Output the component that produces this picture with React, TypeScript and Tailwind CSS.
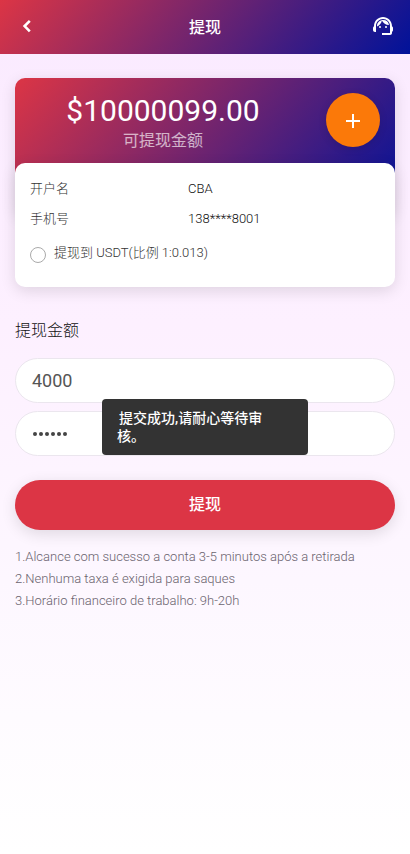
import { MdSupportAgent } from "react-icons/md";

function Header() {
  return (
    <header className="flex h-[54px] items-center justify-between bg-[linear-gradient(130deg,#dc3545,#00129a)] px-[15px] text-white">
      <button className="flex size-6 items-center justify-center" aria-label="返回">
        <svg width="24" height="24" viewBox="0 0 24 24" fill="none" stroke="currentColor" strokeWidth="2.6">
          <path d="M14.8 5.9 9.6 11.1l5.2 5.2" />
        </svg>
      </button>
      <h1 className="pt-px text-base leading-6 font-medium">提现</h1>
      <button className="flex size-6 items-center justify-center" aria-label="客服">
        <MdSupportAgent size={24} className="-mt-0.5" />
      </button>
    </header>
  );
}

function Row({ label, value }: { label: string; value: string }) {
  return (
    <div className="flex h-[30px] items-center text-[13px]">
      <span className="w-[158px] font-light text-[#333]">{label}</span>
      <span className="font-light text-[#111]">{value}</span>
    </div>
  );
}

function BalanceCard() {
  return (
    <section>
      <div className="flex h-[138px] items-start rounded-[10px] bg-[linear-gradient(130deg,#dc3545,#00129a)] pr-[15px] shadow-[0_4px_15px_rgba(0,0,0,0.12)]">
        <div className="flex w-[296px] flex-col items-center pt-[15px] text-white">
          <p className="text-[30px] leading-9">$10000099.00</p>
          <p className="text-base leading-6 text-white/65">可提现金额</p>
        </div>
        <button className="mt-[15px] ml-auto flex size-[54px] items-center justify-center rounded-full bg-[#fb7909] pt-px text-white shadow-[0_2px_8px_rgba(0,0,0,0.12)]" aria-label="+">
          <svg width="14" height="14" viewBox="0 0 14 14" stroke="currentColor" strokeWidth="2">
            <path d="M7 0v14M0 7h14" />
          </svg>
        </button>
      </div>
      <div className="relative -mt-[53px] h-[124px] rounded-[10px] bg-white px-[15px] pt-[11px] shadow-[0_4px_15px_rgba(0,0,0,0.12)]">
        <Row label="开户名" value="CBA" />
        <Row label="手机号" value="138****8001" />
        <label className="mt-[9px] flex items-center text-[13px] leading-5 font-light text-[#333]">
          <span className="mt-[3px] mr-2 size-4 rounded-full border border-[#aaa] bg-white" />
          <span>提现到 USDT(比例 1:0.013)</span>
        </label>
      </div>
    </section>
  );
}

export default function App() {
  return (
    <div className="relative h-[854px] w-[410px] overflow-hidden bg-[linear-gradient(180deg,#faeaff,#fdf0ff_38%,#fdf7ff_68%,#ffffff)] font-[Roboto,'Noto_Sans_CJK_SC',sans-serif]">
      <Header />
      <main className="px-[15px] pt-6">
        <BalanceCard />
        <h2 className="mt-8 text-base leading-6 font-light text-[#111]">提现金额</h2>
        <div className="mt-[15px] flex flex-col gap-2">
          <div className="flex h-[45px] items-center rounded-full border border-[#ebe6ee] bg-white px-4 text-lg text-[#555]">4000</div>
          <div className="flex h-[45px] items-center rounded-full border border-[#ebe6ee] bg-white px-4 text-lg text-[#444]">
            <span className="flex gap-[2px] pl-px">
              {[0, 1, 2, 3, 4, 5].map((i) => (
                <span key={i} className="size-1 rounded-full bg-[#444]" />
              ))}
            </span>
          </div>
        </div>
        <button className="mt-6 flex h-[50px] w-full items-center justify-center rounded-full bg-[#dc3545] text-base font-medium text-white shadow-[0_4px_15px_rgba(0,0,0,0.12)]">
          提现
        </button>
        <div className="mt-4 text-[13px] leading-[22px] font-light text-[#6a636e]">
          <p>1.Alcance com sucesso a conta 3-5 minutos após a retirada</p>
          <p>2.Nenhuma taxa é exigida para saques</p>
          <p>3.Horário financeiro de trabalho: 9h-20h</p>
        </div>
      </main>
      <div className="absolute top-[399px] left-[102px] h-[56px] w-[206px] rounded-[4px] bg-[#333] px-[15px] pt-[10px] text-sm leading-[18px] font-medium text-white">
        <p className="pl-[2px]">提交成功,请耐心等待审</p>
        <p>核。</p>
      </div>
    </div>
  );
}
